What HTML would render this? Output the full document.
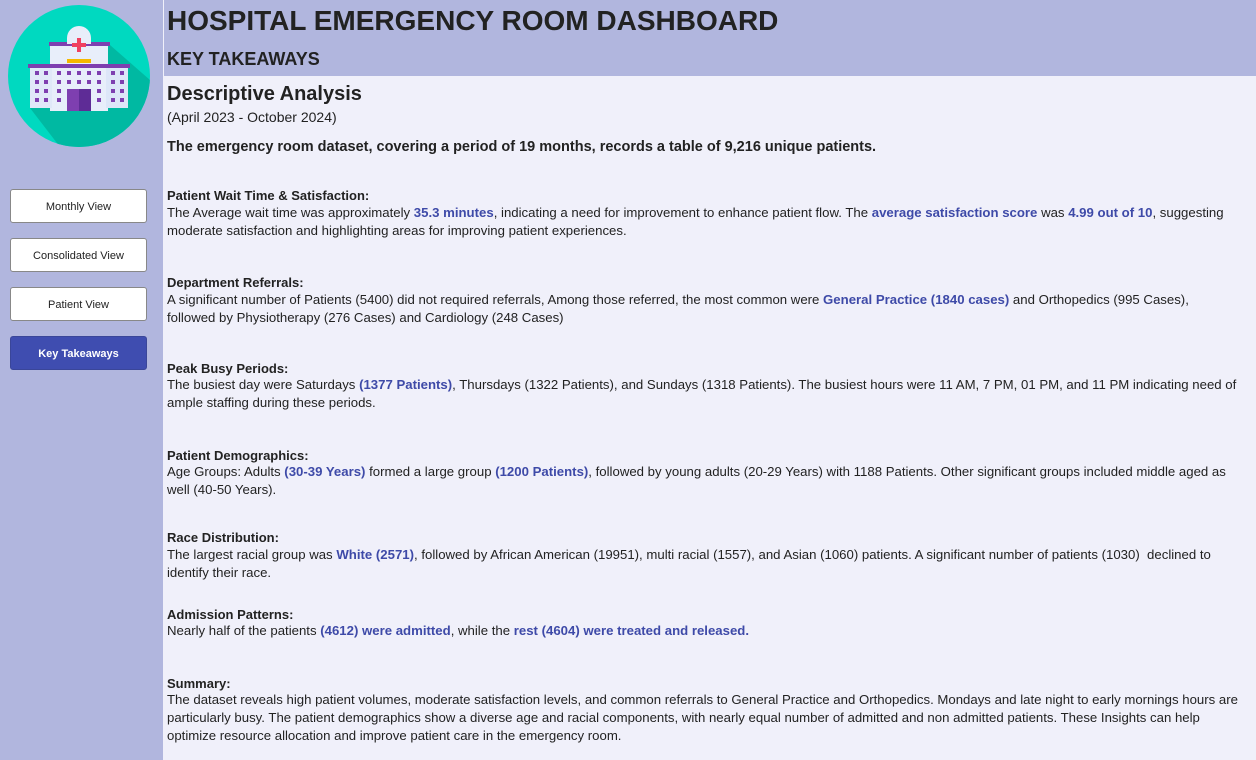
<!DOCTYPE html>
<html><head><meta charset="utf-8"><style>
*{margin:0;padding:0;box-sizing:border-box}
body{width:1256px;height:760px;overflow:hidden;background:#f0f0fa;font-family:"Liberation Sans",sans-serif;color:#222;position:relative}
#side{position:absolute;left:0;top:0;width:163px;height:760px;background:#b1b6de}
#head{position:absolute;left:164px;top:0;width:1092px;height:76px;background:#b1b6de}
.btn{position:absolute;left:10px;width:137px;height:34px;background:#fff;border:1px solid #888;border-radius:3px;font-size:11px;text-align:center;line-height:35px;color:#222}
.btn.on{background:#3f4db0;color:#fff;font-weight:bold;border-color:#3a4699}
.t{position:absolute;left:167px;white-space:nowrap}
.h{font-size:13px;font-weight:bold}
.p{font-size:13.2px;line-height:18px}
b.c{color:#3e4aa8}
</style></head><body>
<div id="side"></div>
<div id="head"></div>
<svg style="position:absolute;left:0;top:0" width="163" height="160">
<defs><clipPath id="cc"><circle cx="79" cy="76" r="71"/></clipPath></defs>
<circle cx="79" cy="76" r="71" fill="#00d9c0"/>
<polygon points="110,45 150,80 150,160 70,160 30,108" fill="#00b9a2" clip-path="url(#cc)"/>
<rect x="50" y="44" width="58" height="67" fill="#e8eefa"/>
<rect x="49" y="42" width="61" height="4" fill="#7e3fb0"/>
<rect x="28" y="64" width="102" height="4" fill="#7e3fb0"/>
<rect x="30" y="68" width="22" height="40" fill="#e0e8f8"/>
<rect x="106" y="68" width="22" height="40" fill="#dde6f8"/>
<path d="M67 44 v-6 a12 12 0 0 1 24 0 v6z" fill="#e8eefa"/>
<rect x="77" y="38" width="4" height="14" fill="#f04060"/><rect x="72" y="43" width="14" height="4" fill="#f04060"/>
<rect x="67" y="59" width="24" height="4" fill="#f5b800"/>
<g fill="#7e3fb0">
<rect x="35" y="71" width="4" height="4"/><rect x="44" y="71" width="4" height="4"/><rect x="35" y="80" width="4" height="4"/><rect x="44" y="80" width="4" height="4"/><rect x="35" y="89" width="4" height="4"/><rect x="44" y="89" width="4" height="4"/><rect x="35" y="98" width="4" height="4"/><rect x="44" y="98" width="4" height="4"/>
<rect x="111" y="71" width="4" height="4"/><rect x="120" y="71" width="4" height="4"/><rect x="111" y="80" width="4" height="4"/><rect x="120" y="80" width="4" height="4"/><rect x="111" y="89" width="4" height="4"/><rect x="120" y="89" width="4" height="4"/><rect x="111" y="98" width="4" height="4"/><rect x="120" y="98" width="4" height="4"/>
<rect x="57" y="71" width="4" height="4"/><rect x="67" y="71" width="4" height="4"/><rect x="77" y="71" width="4" height="4"/><rect x="87" y="71" width="4" height="4"/><rect x="97" y="71" width="4" height="4"/>
<rect x="57" y="80" width="4" height="4"/><rect x="67" y="80" width="4" height="4"/><rect x="77" y="80" width="4" height="4"/><rect x="87" y="80" width="4" height="4"/><rect x="97" y="80" width="4" height="4"/>
<rect x="57" y="89" width="4" height="4"/><rect x="97" y="89" width="4" height="4"/><rect x="57" y="98" width="4" height="4"/><rect x="97" y="98" width="4" height="4"/>
<rect x="67" y="89" width="12" height="22"/></g>
<rect x="79" y="89" width="12" height="22" fill="#5e2c96"/>
</svg>
<div class="btn" style="top:189px">Monthly View</div>
<div class="btn" style="top:238px">Consolidated View</div>
<div class="btn" style="top:287px">Patient View</div>
<div class="btn on" style="top:336px">Key Takeaways</div>
<div class="t" style="top:5px;font-size:28px;font-weight:bold">HOSPITAL EMERGENCY ROOM DASHBOARD</div>
<div class="t" style="top:49px;font-size:18px;font-weight:bold">KEY TAKEAWAYS</div>
<div class="t" style="top:83px;font-size:20px;font-weight:bold">Descriptive Analysis</div>
<div class="t" style="top:109px;font-size:14px">(April 2023 - October 2024)</div>
<div class="t" style="top:139px;font-size:14.5px;font-weight:bold">The emergency room dataset, covering a period of 19 months, records a table of 9,216 unique patients.</div>

<div class="t h" style="top:188px">Patient Wait Time &amp; Satisfaction:</div>
<div class="t p" style="top:204px">The Average wait time was approximately <b class="c">35.3 minutes</b>, indicating a need for improvement to enhance patient flow. The <b class="c">average satisfaction score</b> was <b class="c">4.99 out of 10</b>, suggesting<br>moderate satisfaction and highlighting areas for improving patient experiences.</div>

<div class="t h" style="top:275px">Department Referrals:</div>
<div class="t p" style="top:291px">A significant number of Patients (5400) did not required referrals, Among those referred, the most common were <b class="c">General Practice (1840 cases)</b> and Orthopedics (995 Cases),<br>followed by Physiotherapy (276 Cases) and Cardiology (248 Cases)</div>

<div class="t h" style="top:361px">Peak Busy Periods:</div>
<div class="t p" style="top:376px">The busiest day were Saturdays <b class="c">(1377 Patients)</b>, Thursdays (1322 Patients), and Sundays (1318 Patients). The busiest hours were 11 AM, 7 PM, 01 PM, and 11 PM indicating need of<br>ample staffing during these periods.</div>

<div class="t h" style="top:448px">Patient Demographics:</div>
<div class="t p" style="top:463px">Age Groups: Adults <b class="c">(30-39 Years)</b> formed a large group <b class="c">(1200 Patients)</b>, followed by young adults (20-29 Years) with 1188 Patients. Other significant groups included middle aged as<br>well (40-50 Years).</div>

<div class="t h" style="top:530px">Race Distribution:</div>
<div class="t p" style="top:546px">The largest racial group was <b class="c">White (2571)</b>, followed by African American (19951), multi racial (1557), and Asian (1060) patients. A significant number of patients (1030)&nbsp; declined to<br>identify their race.</div>

<div class="t h" style="top:607px">Admission Patterns:</div>
<div class="t p" style="top:622px">Nearly half of the patients <b class="c">(4612) were admitted</b>, while the <b class="c">rest (4604) were treated and released.</b></div>

<div class="t h" style="top:676px">Summary:</div>
<div class="t p" style="top:691px">The dataset reveals high patient volumes, moderate satisfaction levels, and common referrals to General Practice and Orthopedics. Mondays and late night to early mornings hours are<br>particularly busy. The patient demographics show a diverse age and racial components, with nearly equal number of admitted and non admitted patients. These Insights can help<br>optimize resource allocation and improve patient care in the emergency room.</div>
</body></html>
